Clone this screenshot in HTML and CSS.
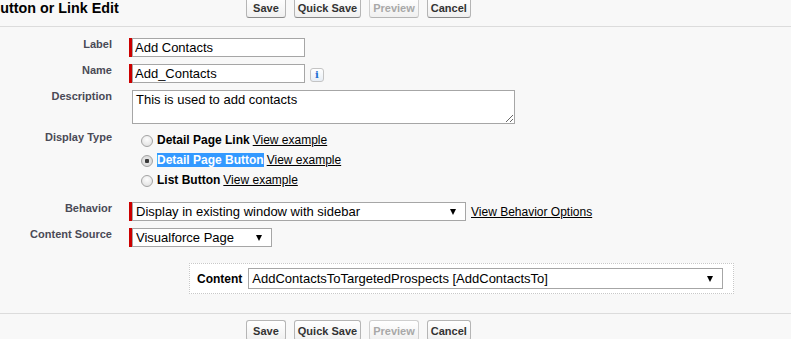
FILE: index.html
```html
<!DOCTYPE html>
<html lang="en">
<head>
    <meta charset="UTF-8">
    <meta name="viewport" content="width=device-width, initial-scale=1.0">
    <title>Custom Button or Link Edit</title>
    <link rel="stylesheet" href="styles.css">
</head>
<body>
    <div class="page-block top">
        <h2 class="title">Button or Link Edit</h2>
        <div class="buttons">
            <button type="button" class="btn">&nbsp;Save&nbsp;</button>
            <button type="button" class="btn">Quick Save</button>
            <button type="button" class="btn" disabled>Preview</button>
            <button type="button" class="btn">Cancel</button>
        </div>
    </div>

    <form class="detail" id="buttonForm">
        <label class="label" for="label">Label</label>
        <div class="field required"><input id="label" class="text" value="Add Contacts"></div>

        <label class="label" for="name">Name</label>
        <div class="field required">
            <input id="name" class="text" value="Add_Contacts">
            <span class="info">i</span>
        </div>

        <label class="label" for="description">Description</label>
        <div class="field"><textarea id="description" class="area">This is used to add contacts</textarea></div>

        <span class="label">Display Type</span>
        <div class="field radios">
            <div class="radio-row">
                <input type="radio" name="type" id="type1">
                <label for="type1" class="opt">Detail Page Link</label>
                <a href="#" class="link">View example</a>
            </div>
            <div class="radio-row">
                <input type="radio" name="type" id="type2" checked>
                <label for="type2" class="opt"><span class="selected">Detail Page Button</span></label>
                <a href="#" class="link">View example</a>
            </div>
            <div class="radio-row">
                <input type="radio" name="type" id="type3">
                <label for="type3" class="opt">List Button</label>
                <a href="#" class="link">View example</a>
            </div>
        </div>

        <label class="label" for="behavior">Behavior</label>
        <div class="field required">
            <span class="select-wrap behavior">
                <select id="behavior" class="select"><option>Display in existing window with sidebar</option></select>
            </span>
            <a href="#" class="link options">View Behavior Options</a>
        </div>

        <label class="label" for="source">Content Source</label>
        <div class="field required">
            <span class="select-wrap source">
                <select id="source" class="select"><option>Visualforce Page</option></select>
            </span>
        </div>
    </form>

    <div class="content-box">
        <label class="content-label" for="content">Content</label>
        <span class="select-wrap content">
            <select id="content" class="select"><option>AddContactsToTargetedProspects [AddContactsTo]</option></select>
        </span>
    </div>

    <div class="page-block bottom">
        <div class="buttons">
            <button type="button" class="btn">&nbsp;Save&nbsp;</button>
            <button type="button" class="btn">Quick Save</button>
            <button type="button" class="btn" disabled>Preview</button>
            <button type="button" class="btn">Cancel</button>
        </div>
    </div>
</body>
</html>
```

FILE: styles.css
```css
body {
    margin: 0;
    background-color: #f8f8f8;
    font-family: "Liberation Sans", Arial, sans-serif;
    color: #000;
    overflow: hidden;
}
.page-block {
    display: flex;
    align-items: flex-start;
}
.top {
    height: 26px;
    border-bottom: 1px solid #dcdcdc;
}
.bottom {
    margin-top: 19px;
    padding-top: 6px;
    border-top: 1px solid #dcdcdc;
}
.title {
    flex: 0 0 256px;
    margin: 0 0 0 -10px;
    font-size: 14.3px;
    line-height: 17px;
    font-weight: bold;
    white-space: nowrap;
}
.top .buttons {
    margin-top: -3px;
}
.bottom .buttons {
    margin-left: 246px;
}
.buttons {
    display: flex;
    gap: 8px;
}
.btn {
    height: 21px;
    padding: 0 3px;
    font-family: "Liberation Sans", Arial, sans-serif;
    font-size: 11px;
    font-weight: bold;
    color: #333;
    background: linear-gradient(#ffffff, #f0f0f0);
    border: 1px solid #b5b5b5;
    border-bottom-color: #8a8a8a;
    border-radius: 3px;
    white-space: nowrap;
}
.btn:disabled {
    color: #a8a8a8;
    border-color: #cfcfcf;
    border-bottom-color: #b5b5b5;
}

.detail {
    display: grid;
    grid-template-columns: 112px 1fr;
    column-gap: 17px;
    row-gap: 7px;
    padding-top: 11px;
}
.label {
    text-align: right;
    font-size: 11px;
    line-height: 13px;
    font-weight: bold;
    color: #4a4a56;
}
.field {
    display: flex;
    align-items: center;
    padding-left: 3px;
}
.required {
    padding-left: 0;
    border-left: 3px solid #c00;
    height: 19px;
    align-self: start;
}
.text {
    box-sizing: border-box;
    width: 173px;
    height: 19px;
    margin: 0;
    padding: 0 2px;
    border: 1px solid #a6a6a6;
    font-family: "Liberation Sans", Arial, sans-serif;
    font-size: 13px;
    color: #000;
    background: #fff;
}
.info {
    display: inline-flex;
    align-items: center;
    justify-content: center;
    box-sizing: border-box;
    width: 14px;
    height: 14px;
    margin-left: 5px;
    margin-top: 2px;
    border: 1px solid #c4c4c4;
    border-radius: 3px;
    background: linear-gradient(#ffffff, #e8eef5);
    color: #1d6fd2;
    font-family: "DejaVu Serif", serif;
    font-weight: bold;
    font-size: 10px;
}
.area {
    box-sizing: border-box;
    width: 383px;
    height: 34px;
    margin: 0;
    padding: 1px 3px;
    border: 1px solid #a6a6a6;
    font-family: "Liberation Sans", Arial, sans-serif;
    font-size: 13px;
    color: #000;
    background: #fff;
}
.radios {
    flex-direction: column;
    align-items: flex-start;
    margin-top: -1px;
    margin-bottom: 5px;
}
.radio-row {
    display: flex;
    align-items: center;
    height: 20px;
}
.radio-row input {
    appearance: none;
    box-sizing: border-box;
    width: 12px;
    height: 12px;
    margin: 1px 4px 0 9px;
    border: 1px solid #a3a3a3;
    border-radius: 50%;
    background: radial-gradient(circle at 50% 35%, #fdfdfd, #dcdcdc);
}
.radio-row input:checked {
    background: radial-gradient(circle, #3a3a3a 0, #3a3a3a 2px, #e4e4e4 2.5px, #d4d4d4 100%);
}
.opt {
    font-size: 12px;
    font-weight: bold;
    line-height: 15px;
}
.selected {
    background: #3399ff;
    color: #fff;
}
.link {
    margin-left: 3px;
    font-size: 12px;
    color: #000;
    text-decoration: underline;
}
.options {
    margin-left: 5px;
}
.select-wrap {
    position: relative;
    display: inline-block;
}
.select-wrap::after {
    content: "";
    position: absolute;
    right: 10px;
    top: 7px;
    border-left: 3.5px solid transparent;
    border-right: 3.5px solid transparent;
    border-top: 6px solid #000;
    pointer-events: none;
}
.select {
    appearance: none;
    box-sizing: border-box;
    height: 19px;
    margin: 0;
    padding: 0 3px;
    border: 1px solid #a6a6a6;
    border-radius: 0;
    background: #fff;
    font-family: "Liberation Sans", Arial, sans-serif;
    font-size: 13px;
    color: #000;
}
.behavior .select {
    width: 334px;
}
.source .select {
    width: 140px;
}
.content-box {
    display: flex;
    align-items: center;
    box-sizing: border-box;
    width: 545px;
    height: 31px;
    margin: 16px 0 0 189px;
    padding-left: 7px;
    border: 1px dotted #c8c8c8;
    background: #fff;
}
.content-label {
    margin-right: 6px;
    font-size: 12px;
    font-weight: bold;
}
.content .select {
    width: 475px;
    height: 21px;
}
.content.select-wrap::after {
    top: 8px;
}
```
